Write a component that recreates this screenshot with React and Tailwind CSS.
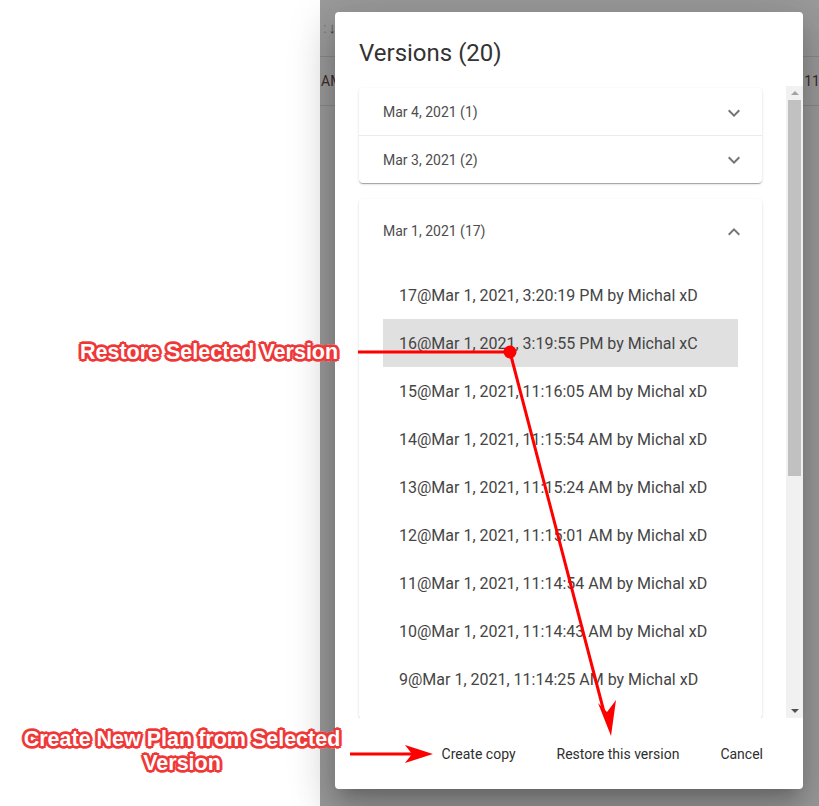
import React from 'react';

const versions = [
  '17@Mar 1, 2021, 3:20:19 PM by Michal xD',
  '16@Mar 1, 2021, 3:19:55 PM by Michal xC',
  '15@Mar 1, 2021, 11:16:05 AM by Michal xD',
  '14@Mar 1, 2021, 11:15:54 AM by Michal xD',
  '13@Mar 1, 2021, 11:15:24 AM by Michal xD',
  '12@Mar 1, 2021, 11:15:01 AM by Michal xD',
  '11@Mar 1, 2021, 11:14:54 AM by Michal xD',
  '10@Mar 1, 2021, 11:14:43 AM by Michal xD',
  '9@Mar 1, 2021, 11:14:25 AM by Michal xD',
];

const ExpandMore = () => (
  <svg viewBox="0 0 24 24" className="w-[24px] h-[24px] fill-[#757575]">
    <path d="M16.59 8.59L12 13.17 7.41 8.59 6 10l6 6 6-6z" />
  </svg>
);

const ExpandLess = () => (
  <svg viewBox="0 0 24 24" className="w-[24px] h-[24px] fill-[#757575]">
    <path d="M12 8l-6 6 1.41 1.41L12 10.83l4.59 4.58L18 14z" />
  </svg>
);

const paper =
  'bg-white rounded-[4px] shadow-[0_2px_1px_-1px_rgba(0,0,0,0.2),0_1px_1px_0_rgba(0,0,0,0.14),0_1px_3px_0_rgba(0,0,0,0.12)]';

const outline =
  '[text-shadow:2px_0_#ef3737,-2px_0_#ef3737,0_2px_#ef3737,0_-2px_#ef3737,2px_2px_#ef3737,-2px_-2px_#ef3737,2px_-2px_#ef3737,-2px_2px_#ef3737,3px_0_#f56a6a,-3px_0_#f56a6a,0_3px_#f56a6a,0_-3px_#f56a6a]';

export default function App() {
  return (
    <div className="relative flex w-[819px] h-[806px] overflow-hidden font-['Roboto',sans-serif]">
      <div className="w-[320px] shrink-0 bg-white" />

      {/* backdrop with the dimmed page behind */}
      <div className="relative flex-1 bg-[#9b9b9b]">
        <div className="h-[57px] border-b border-[#8a8a8a] flex items-center pl-[3px] text-[14px] text-[#4a4a4a]">
          <span className="text-[#5a7fa8]">:</span>
          <span className="ml-[2px] text-[15px]">↓</span>
        </div>
        <div className="h-[49px] border-b border-[#8a8a8a] flex items-center justify-between pl-[1px] text-[14px] text-[#3b2a2a]">
          <span>AM</span>
          <span className="mr-[-1px]">11</span>
        </div>

        {/* dialog */}
        <div className="absolute left-[15px] top-[12px] w-[468px] h-[777px] bg-white rounded-[4px] flex flex-col shadow-[0_11px_15px_-7px_rgba(0,0,0,0.2),0_24px_38px_3px_rgba(0,0,0,0.14),0_9px_46px_8px_rgba(0,0,0,0.12)]">
          <div className="h-[74px] shrink-0 pt-[25px] px-[24px]">
            <h2 className="text-[24px] leading-[32px] text-[#333333] font-normal">Versions (20)</h2>
          </div>

          <div className="h-[632px] shrink-0 flex">
            <div className="flex-1 overflow-hidden px-[24px] pt-[2px]">
              <div className={paper}>
                <div className="h-[48px] flex items-center justify-between pl-[24px] pr-[16px] pt-[1px]">
                  <span className="text-[14px] text-[#4d4d4d]">Mar 4, 2021 (1)</span>
                  <ExpandMore />
                </div>
                <div className="h-[48px] flex items-center justify-between pl-[24px] pr-[16px] pt-[1px] border-t border-[#ebebeb] mt-[-1px]">
                  <span className="text-[14px] text-[#4d4d4d]">Mar 3, 2021 (2)</span>
                  <ExpandMore />
                </div>
              </div>

              <div className={`${paper} mt-[16px]`}>
                <div className="h-[64px] flex items-center justify-between pl-[24px] pr-[16px] pt-[1px]">
                  <span className="text-[14px] text-[#4d4d4d]">Mar 1, 2021 (17)</span>
                  <ExpandLess />
                </div>
                <div className="pt-[8px] px-[24px] pb-[16px]">
                  {versions.map((v, i) => (
                    <div
                      key={v}
                      className={`h-[48px] flex items-center px-[16px] pt-[1px] text-[16px] text-[#454545] ${i === 1 ? 'bg-[#e0e0e0]' : ''}`}
                    >
                      {v}
                    </div>
                  ))}
                </div>
              </div>
            </div>

            {/* scrollbar */}
            <div className="w-[17px] shrink-0 bg-[#f1f1f1] flex flex-col items-center">
              <div className="h-[14px] flex items-center justify-center">
                <div className="w-0 h-0 border-l-[4px] border-r-[4px] border-b-[4px] border-l-transparent border-r-transparent border-b-[#a3a3a3]" />
              </div>
              <div className="w-[13px] h-[376px] bg-[#c1c1c1]" />
              <div className="flex-1" />
              <div className="h-[14px] flex items-center justify-center">
                <div className="w-0 h-0 border-l-[4px] border-r-[4px] border-t-[4px] border-l-transparent border-r-transparent border-t-[#505050]" />
              </div>
            </div>
          </div>

          <div className="flex-1 flex items-center justify-end gap-[25px] pr-[32px] pt-[2px] text-[14px] text-[#2e2e2e]">
            <button className="px-[8px] py-[6px]">Create copy</button>
            <button className="px-[8px] py-[6px]">Restore this version</button>
            <button className="px-[8px] py-[6px]">Cancel</button>
          </div>
        </div>
      </div>

      {/* annotations */}
      <div className={`absolute left-[80px] top-[340px] text-[21.5px] leading-[24px] font-bold text-white font-['Liberation_Sans',Arial,sans-serif] whitespace-nowrap ${outline}`}>
        Restore Selected Version
      </div>
      <div className={`absolute left-[10px] top-[727px] w-[344px] text-center text-[21.5px] leading-[24px] font-bold text-white font-['Liberation_Sans',Arial,sans-serif] ${outline}`}>
        Create New Plan from Selected Version
      </div>

      <svg className="absolute left-0 top-0 pointer-events-none" width="819" height="806" viewBox="0 0 819 806">
        <line x1="358" y1="352" x2="510" y2="352" stroke="#ff0000" strokeWidth="3" />
        <circle cx="510" cy="352" r="6.5" fill="#ff0000" />
        <line x1="510" y1="352" x2="604" y2="712" stroke="#ff0000" strokeWidth="3" />
        <path d="M611 736 L598 703 L607 712 L616 700 Z" fill="#ff0000" />
        <line x1="350" y1="754" x2="414" y2="754" stroke="#ff0000" strokeWidth="3" />
        <path d="M433 754 L405 745 L412 754 L405 763 Z" fill="#ff0000" />
      </svg>
    </div>
  );
}
